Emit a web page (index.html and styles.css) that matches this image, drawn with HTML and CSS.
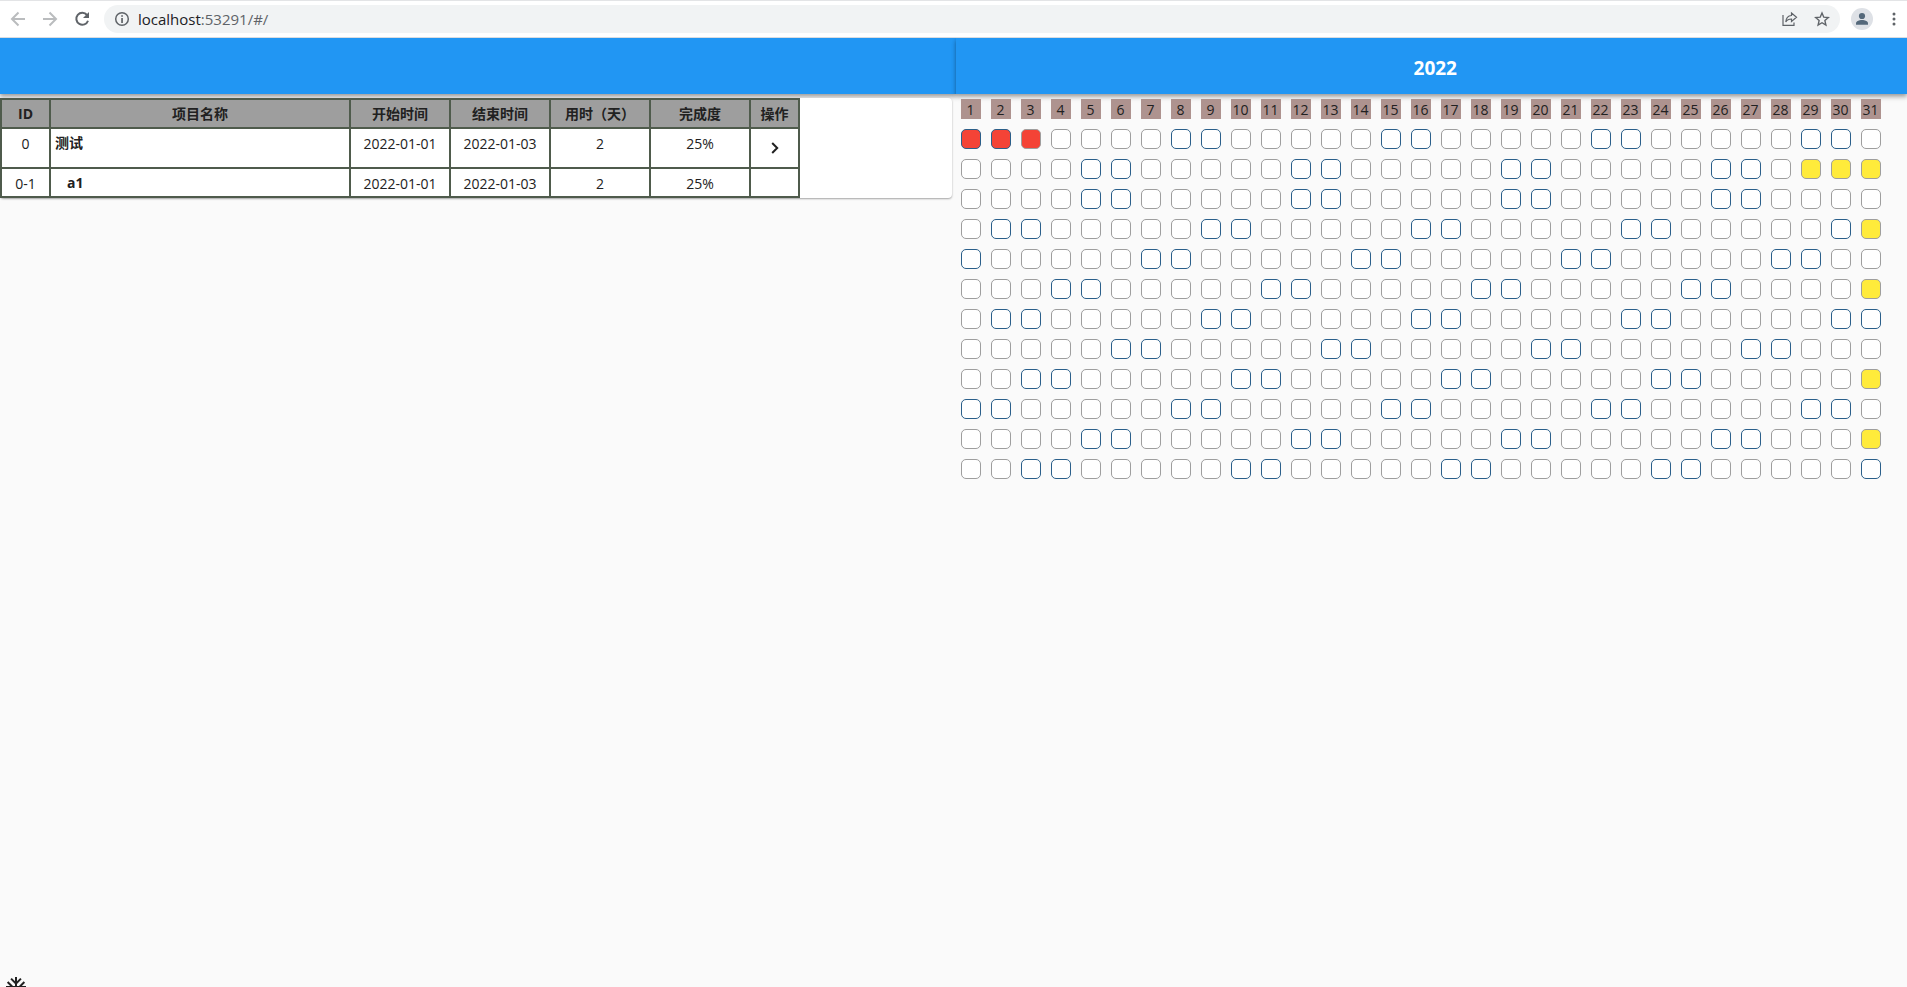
FILE: index.html
```html
<!DOCTYPE html>
<html lang="zh-CN">
<head>
<meta charset="utf-8">
<title>2022</title>
<link rel="stylesheet" href="styles.css">
</head>
<body>
<header class="toolbar">
  <button class="nav-btn off" aria-label="Back"><svg width="16" height="16" viewBox="0 0 16 16" fill="none" stroke="currentColor" stroke-width="2"><path d="M15 8H2.500M8.500 1.500L2 8l6.500 6.500"/></svg></button>
  <button class="nav-btn off" aria-label="Forward"><svg width="16" height="16" viewBox="0 0 16 16" fill="none" stroke="currentColor" stroke-width="2"><path d="M1 8h12.500M7.500 1.500L14 8l-6.500 6.500"/></svg></button>
  <button class="nav-btn" aria-label="Reload"><svg width="16" height="16" viewBox="0 0 16 16"><path d="M13 4A6 6 0 1 0 14 9.700" fill="none" stroke="currentColor" stroke-width="2"/><path d="M15 1v6H9z" fill="currentColor"/></svg></button>
  <div class="omnibox">
    <svg class="info" width="16" height="16" viewBox="0 0 16 16"><circle cx="8" cy="8" r="6.300" fill="none" stroke="currentColor" stroke-width="1.500"/><path d="M7.200 4.200h1.700v1.600H7.200zM7.200 7h1.700v5H7.200z" fill="currentColor"/></svg>
    <a class="url" href="#/">localhost<span class="url-rest">:53291/#/</span></a>
    <button class="box-btn" aria-label="Share"><svg width="16" height="16" viewBox="0 0 16 16" fill="none" stroke="currentColor" stroke-width="1.200"><path d="M1 4v10.400h11V11.500"/><path d="M9.500 2l5 4.200-5 4.200V8C6.500 8 4.800 9.200 3.800 11c.2-3.500 2-6.200 5.700-6.500z"/></svg></button>
    <button class="box-btn" aria-label="Bookmark"><svg width="16" height="16" viewBox="0 0 16 16" fill="none" stroke="currentColor" stroke-width="1.400"><path d="M8 2l1.800 4.200 4.500.4-3.400 3 1 4.400L8 11.700 4.100 14l1-4.400-3.400-3 4.500-.4z"/></svg></button>
  </div>
  <button class="avatar" aria-label="Profile"><svg width="22" height="22" viewBox="0 0 22 22" fill="currentColor"><circle cx="11" cy="8" r="3.100"/><path d="M5 16.700v-1.400c0-2 3-3.300 6-3.300s6 1.300 6 3.300v1.400z"/></svg></button>
  <button class="more" aria-label="More"><svg width="4" height="14" viewBox="0 0 4 14" fill="currentColor"><circle cx="2" cy="2" r="1.500"/><circle cx="2" cy="7" r="1.500"/><circle cx="2" cy="12" r="1.500"/></svg></button>
</header>
<main class="page">
  <section class="pane pane-left">
    <div class="appbar"></div>
    <div class="card">
      <table class="tasks">
        <colgroup><col class="c-id"><col class="c-name"><col class="c-mid"><col class="c-mid"><col class="c-mid"><col class="c-mid"><col class="c-act"></colgroup>
        <thead><tr><th>ID</th><th>项目名称</th><th>开始时间</th><th>结束时间</th><th>用时（天）</th><th>完成度</th><th>操作</th></tr></thead>
        <tbody>
          <tr class="parent"><td>0</td><td class="name">测试</td><td>2022-01-01</td><td>2022-01-03</td><td>2</td><td>25%</td><td><button class="expand" aria-label="展开"><svg width="8" height="12" viewBox="0 0 8 12" fill="none" stroke="currentColor" stroke-width="2"><path d="M1.200 1l5 5-5 5"/></svg></button></td></tr>
          <tr><td>0-1</td><td class="name child">a1</td><td>2022-01-01</td><td>2022-01-03</td><td>2</td><td>25%</td><td></td></tr>
        </tbody>
      </table>
    </div>
  </section>
  <section class="pane pane-right">
    <div class="appbar"><h1 class="year">2022</h1></div>
    <div class="calendar" id="calendar"></div>
  </section>
  <svg class="flake" width="24" height="24" viewBox="0 0 24 24" fill="currentColor"><path d="M22 11h-4.170l3.240-3.240-1.410-1.420L15 11h-2V9l4.660-4.660-1.420-1.410L13 6.170V2h-2v4.170L7.760 2.930 6.340 4.340 11 9v2H9L4.340 6.340 2.930 7.760 6.170 11H2v2h4.170l-3.240 3.240 1.410 1.420L9 13h2v2l-4.660 4.660 1.420 1.410L11 17.830V22h2v-4.170l3.240 3.240 1.420-1.410L13 15v-2h2l4.660 4.660 1.410-1.420L17.830 13H22z"/></svg>
</main>
<script src="calendar.js"></script>
</body>
</html>
```
FILE: styles.css
```css
* { box-sizing: border-box; }
body {
  margin: 0;
  height: 100vh;
  display: flex;
  flex-direction: column;
  overflow: hidden;
  background: #fafafa;
  color: #212121;
  font: 14px/20px "Open Sans", "Noto Sans", "Noto Sans CJK SC", sans-serif;
}
button { border: 0; padding: 0; background: none; color: inherit; display: flex; align-items: center; justify-content: center; }
svg { display: block; }

.toolbar {
  flex: none;
  height: 38px;
  display: flex;
  align-items: center;
  padding: 0 9px 0 2px;
  background: #fff;
  border-top: 1px solid #e3e4e6;
  border-bottom: 1px solid #dadce0;
  color: #5f6368;
}
.nav-btn { width: 32px; height: 28px; }
.nav-btn.off { color: #babcbe; }
.omnibox {
  flex: 1;
  height: 28px;
  display: flex;
  align-items: center;
  margin-left: 6px;
  padding: 0 10px;
  border-radius: 14px;
  background: #f1f3f4;
}
.url { flex: 1; margin-left: 8px; font-size: 15px; color: #202124; text-decoration: none; }
.url-rest { color: #5f6368; }
.box-btn { width: 16px; height: 16px; margin-left: 16px; }
.avatar { width: 22px; height: 22px; margin-left: 11px; border-radius: 50%; background: #dee1e6; color: #54687a; }
.more { width: 8px; height: 20px; margin-left: 17px; }

.page { flex: 1; min-height: 0; display: flex; position: relative; overflow: hidden; }
.pane { flex: 1; min-width: 0; }
.pane-right { position: relative; margin-left: 4px; }
.pane-left .appbar { margin-right: -4px; }
.appbar {
  height: 56px;
  display: flex;
  align-items: center;
  justify-content: center;
  background: #2196f3;
  box-shadow: 0 2px 4px rgba(0, 0, 0, .3), 0 4px 5px rgba(0, 0, 0, .12);
}
.year { margin: 0; padding: 4px 0 0 8px; font-size: 19px; line-height: 24px; font-weight: 700; color: #fff; }
.card {
  margin-top: 4px;
  background: #fff;
  border-radius: 4px;
  box-shadow: 0 1px 2px rgba(0, 0, 0, .35);
}
.tasks { width: 800px; table-layout: fixed; border-collapse: collapse; }
.c-id { width: 49px; }
.c-name { width: 300px; }
.c-mid { width: 100px; }
.tasks th, .tasks td { border: 2px solid #4f5b4c; padding: 5px 4px 2px; vertical-align: top; text-align: center; }
.tasks th { padding: 4px 4px 3px; background: #9e9e9e; font-weight: 700; }
.tasks .parent td { height: 40px; }
.tasks .name { padding-top: 4px; padding-bottom: 3px; text-align: left; font-weight: 700; }
.tasks .child { padding-left: 16px; }
.expand { width: 24px; height: 24px; margin: 2px auto 0; }

.calendar { display: grid; grid-template-columns: repeat(31, 20px); gap: 10px; padding: 5px 0 0 5px; }
.day { height: 20px; background: #ae938f; text-align: center; font-size: 14px; line-height: 22px; }
.date { height: 20px; border: 1px solid #9e9e9e; border-radius: 5px; background: #fff; }
.date.weekend { border-color: #2a5f8a; }
.date.busy { background: #f44336; }
.date.invalid { background: #ffeb3b; }
.flake { position: absolute; left: 4px; bottom: -12px; }
```
FILE: calendar.js
```javascript
const year = 2022;
const calendar = document.getElementById('calendar');

function addCell(className, text) {
  const cell = document.createElement('div');
  cell.className = className;
  cell.textContent = text;
  calendar.append(cell);
}

for (let day = 1; day <= 31; day++) addCell('day', day);

for (let month = 0; month < 12; month++) {
  const length = new Date(year, month + 1, 0).getDate();
  for (let day = 1; day <= 31; day++) {
    let name = 'date';
    if (day > length) {
      name += ' invalid';
    } else if ([0, 6].includes(new Date(year, month, day).getDay())) {
      name += ' weekend';
    }
    if (month === 0 && day <= 3) name += ' busy';
    addCell(name, '');
  }
}
```
